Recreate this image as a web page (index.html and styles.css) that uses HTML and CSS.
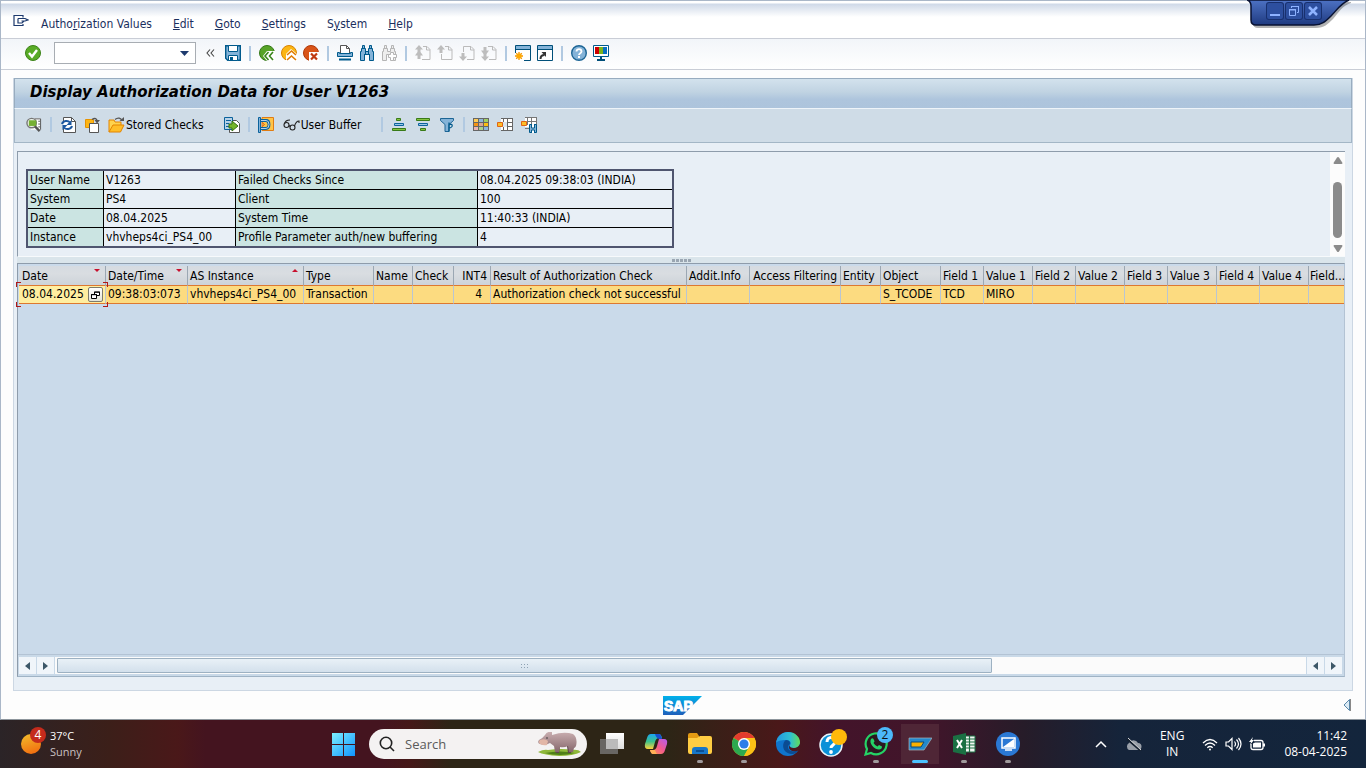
FILE: index.html
```html
<!DOCTYPE html>
<html lang="en">
<head>
    <meta charset="UTF-8">
    <meta name="viewport" content="width=device-width, initial-scale=1.0">
    <title>Display Authorization Data for User V1263</title>
    <link rel="stylesheet" href="styles.css">
</head>
<body>
    <div class="window">
        <nav class="menu-bar">
            <button class="icon-btn menu-icon" aria-label="Menu">
                <svg width="16" height="14" viewBox="0 0 16 14" fill="none" stroke="#1d3a6e" stroke-width="1.2"><path d="M10 3.500V1.500H1V11.500H10V10"/><path d="M5 4.500H12l3 1.500-3 1H8.500M5 4.500v4.500H9l2-2"/></svg>
            </button>
            <a href="#">Autho<u>r</u>ization Values</a>
            <a href="#"><u>E</u>dit</a>
            <a href="#"><u>G</u>oto</a>
            <a href="#"><u>S</u>ettings</a>
            <a href="#">S<u>y</u>stem</a>
            <a href="#"><u>H</u>elp</a>
        </nav>

        <div class="window-controls">
            <svg class="controls-shape" width="104" height="30" viewBox="0 0 104 30">
                <defs><linearGradient id="tab" x1="0" y1="0" x2="0" y2="1"><stop offset="0" stop-color="#4d72c4"/><stop offset="1" stop-color="#1f3a80"/></linearGradient></defs>
                <path d="M1 0c3 1 4 3 4 6v15q0 5 5 5h58c8 0 12-4 17-9C91 10 94 4 103 1V0z" fill="#000" opacity=".3" transform="translate(1 2)"/>
                <path d="M0 0c3 1 4 3 4 6v14q0 5 5 5h58c8 0 12-4 17-9C90 10 94 3 102 0z" fill="url(#tab)" stroke="#081233" stroke-width="1.500"/>
            </svg>
            <div class="controls-row">
                <button aria-label="Minimize"><svg width="16" height="16" viewBox="0 0 16 16"><path d="M3 11h10v2H3z" fill="#8fb3ff"/></svg></button>
                <button aria-label="Restore"><svg width="16" height="16" viewBox="0 0 16 16" fill="none" stroke="#8fb3ff"><path d="M5.500 5V3.500h7v6H11M3.500 7h6v5.500h-6zM3 6.500h7M5 3.500h8"/></svg></button>
                <button aria-label="Close"><svg width="16" height="16" viewBox="0 0 16 16" stroke="#8fb3ff" stroke-width="2.500"><path d="M4 4l8 8M12 4l-8 8"/></svg></button>
            </div>
        </div>

        <div class="toolbar">
            <button class="icon-btn ok-btn" aria-label="Enter"><svg width="18" height="18" viewBox="0 0 18 18"><circle cx="9" cy="9" r="7.500" fill="#58ab26" stroke="#3c8318"/><path d="M5 9l3 3.500L13 6" fill="none" stroke="#fff" stroke-width="2.400"/></svg></button>
            <label class="command">
                <input type="text" aria-label="Command">
                <svg width="9" height="5" viewBox="0 0 9 5"><path d="M0 0h9L4.500 5z" fill="#1d3a6e"/></svg>
            </label>
            <button class="icon-btn collapse-btn" aria-label="Collapse"><svg width="9" height="8" viewBox="0 0 9 8" fill="none" stroke="#444" stroke-width="1.100"><path d="M4 .5L1 4l3 3.500M8 .5L5 4l3 3.500"/></svg></button>
            <button class="icon-btn" aria-label="Save"><svg width="16" height="16" viewBox="0 0 16 16"><path d="M.7.7h14.600v14.600H2.700l-2-2z" fill="#84b3d8" stroke="#005a8c" stroke-width="1.400"/><path d="M3.500.5h9v6h-9z" fill="#fff" stroke="#005a8c"/><path d="M3.500 10.500h9v5h-9z" fill="#fff" stroke="#005a8c"/><path d="M5 12h3v3H5z" fill="#005a8c"/></svg></button>
            <span class="sep"></span>
            <button class="icon-btn" aria-label="Back"><svg width="16" height="16" viewBox="0 0 16 16"><circle cx="8" cy="8" r="7.500" fill="#57a327" stroke="#347818"/><path d="M4 11l4-5h8v10H8z" fill="#fff"/><path d="M9.500 7L6 11l3.500 4M14 7l-3.500 4 3.500 4" fill="none" stroke="#3b851c" stroke-width="1.600"/></svg></button>
            <button class="icon-btn" aria-label="Exit"><svg width="16" height="16" viewBox="0 0 16 16"><circle cx="8" cy="8" r="7.500" fill="#fbb614" stroke="#d98200"/><path d="M5 9l5-5 6 5v7H5z" fill="#fff"/><path d="M6 10l4.500-4 4.500 4M6 15l4.500-4 4.500 4" fill="none" stroke="#e07a00" stroke-width="1.600"/></svg></button>
            <button class="icon-btn" aria-label="Cancel"><svg width="16" height="16" viewBox="0 0 16 16"><circle cx="8" cy="8" r="7.500" fill="#d95418" stroke="#b03808"/><path d="M6 7h10v9H6z" fill="#fff"/><path d="M8 8.500l6 6M14 8.500l-6 6" stroke="#c03a10" stroke-width="2.200"/></svg></button>
            <span class="sep"></span>
            <button class="icon-btn" aria-label="Print"><svg width="16" height="16" viewBox="0 0 16 16"><path d="M3.500 8V.5h6l3 3V8" fill="#fff" stroke="#555"/><path d="M9.500.5v3h3" fill="none" stroke="#555"/><path d="M.5 7.500h2v1h11v-1h2v4H.5z" fill="#84b3d8" stroke="#005a8c"/><path d="M2 13.500h12v2H2z" fill="#005a8c"/></svg></button>
            <button class="icon-btn" aria-label="Find"><svg width="16" height="16" viewBox="0 0 16 16" fill="#84b3d8" stroke="#005a8c"><path d="M3.500.5h2v3h-2zM10.500.5h2v3h-2zM2.500 3.500h4v3h3v-3h4v3h1v9h-4v-6h-5v6h-4v-9h1z"/><path d="M6.500 6v3.500M9.500 6v3.500M5.500 9v3M10.500 9v3"/></svg></button>
            <button class="icon-btn" aria-label="Find next"><svg width="16" height="16" viewBox="0 0 16 16" fill="#eee" stroke="#b5b5b5"><path d="M3.500.5h2v3h-2zM10.500.5h2v3h-2zM2.500 3.500h4v3h3v-3h4v3h1v9h-4v-6h-5v6h-4v-9h1z"/><path d="M9.500 7.500h3v2h3v3h-3v3h-3v-3h-2v-3h2z" fill="#fff"/></svg></button>
            <span class="sep"></span>
            <button class="icon-btn" aria-label="First page"><svg width="16" height="16" viewBox="0 0 16 16"><path d="M8 1.500h4l3 3v10H7M11.500 1.500v3.500h3.500" fill="none" stroke="#bbb"/><path d="M4 0l4 4.500H5.500V7L8 10.500H5.500V14h-3v-3.500H0L2.500 7V4.500H0z" fill="#bdbdbd"/></svg></button>
            <button class="icon-btn" aria-label="Previous page"><svg width="16" height="16" viewBox="0 0 16 16"><path d="M8 1.500h4l3 3v10H4.500V9M11.500 1.500v3.500h3.500" fill="none" stroke="#bbb"/><path d="M4 0l4 4.500H5.500V8h-3V4.500H0z" fill="#bdbdbd"/></svg></button>
            <button class="icon-btn" aria-label="Next page"><svg width="16" height="16" viewBox="0 0 16 16"><path d="M4.500 7V1.500H12l3 3v10H8M11.500 1.500v3.500h3.500" fill="none" stroke="#bbb"/><path d="M4 16l4-4.500H5.500V8h-3v3.500H0z" fill="#bdbdbd"/></svg></button>
            <button class="icon-btn" aria-label="Last page"><svg width="16" height="16" viewBox="0 0 16 16"><path d="M7 1.500h5l3 3v10H8M11.500 1.500v3.500h3.500" fill="none" stroke="#bbb"/><path d="M4 16l4-4.500H5.500V9L8 5.500H5.500V2h-3v3.500H0L2.500 9v2.500H0z" fill="#bdbdbd"/></svg></button>
            <span class="sep"></span>
            <button class="icon-btn" aria-label="New session"><svg width="16" height="16" viewBox="0 0 16 16"><path d="M.5.5h15v15H.5z" fill="#fff"/><path d="M.5 8V.5h15v15H9" fill="none" stroke="#004f79"/><path d="M1 1h14v3H1z" fill="#84b3d8"/><path d="M0 4.500h16" stroke="#004f79"/><path d="M4 7v8M0 11h8M1.200 8.200l5.600 5.600M6.800 8.200l-5.600 5.600" stroke="#f59500" stroke-width="1.300"/><circle cx="4" cy="11" r="2.500" fill="#fa0"/></svg></button>
            <button class="icon-btn" aria-label="Create shortcut"><svg width="16" height="16" viewBox="0 0 16 16"><path d="M.5.500h15v15H.5z" fill="#fff" stroke="#004f79"/><path d="M1 1h14v3H1z" fill="#84b3d8"/><path d="M0 4.500h16" stroke="#004f79"/><path d="M3.500 14c0-3 1-4 4-4" fill="none" stroke="#333" stroke-width="2"/><path d="M4.500 7H9v5z" fill="#333"/></svg></button>
            <span class="sep"></span>
            <button class="icon-btn" aria-label="Help"><svg width="16" height="16" viewBox="0 0 16 16"><circle cx="8" cy="8" r="7.300" fill="#84b3d8" stroke="#1c6595" stroke-width="1.400"/><path d="M5.500 6.500c0-3.300 5-3.300 5 0 0 1.700-2.500 1.700-2.500 3.500" fill="none" stroke="#fff" stroke-width="1.800"/><path d="M7 11h2v2H7z" fill="#fff"/></svg></button>
            <button class="icon-btn" aria-label="Customize layout"><svg width="16" height="16" viewBox="0 0 16 16"><path d="M.5.500h15v11H.5z" fill="#fff" stroke="#005a8c"/><path d="M2 2h4v7H2z" fill="#c00"/><path d="M6 2h4v7H6z" fill="#7cb51c"/><path d="M10 2h4v7h-4z" fill="#0a70c0"/><path d="M7 12h2v2h3v2H4v-2h3z" fill="#004f79"/></svg></button>
        </div>

        <main class="frame">
            <h1 class="title">Display Authorization Data for User V1263</h1>
            <div class="app-toolbar">
                <button class="icon-btn" aria-label="Details"><svg width="16" height="16" viewBox="0 0 17 16"><path d="M5 1h10v12H5z" fill="#fff"/><path d="M9 1.500h6.500V13M13 4h2M13 7h2M13 10h2" fill="none" stroke="#555"/><circle cx="6" cy="6" r="5" fill="#eef5ea" stroke="#777" stroke-width="1.500"/><path d="M3 3h8v6H3z" fill="#76b033"/><path d="M9.500 9.500l5 5" stroke="#555" stroke-width="2.600"/></svg></button>
                <span class="sep"></span>
                <button class="icon-btn" aria-label="Refresh"><svg width="16" height="16" viewBox="0 0 16 16"><path d="M3.500 6V.5h8l4 4v11h-12V11" fill="#fff" stroke="#555"/><path d="M11.500.5v4h4" fill="none" stroke="#555"/><path d="M2 7c1-3.500 6-4 8-1.500M12 9c-1 3.500-6 4-8 1.500" fill="none" stroke="#1b57a0" stroke-width="2"/><path d="M11.500 3v5h-5zM2.500 13V8h5z" fill="#1b57a0"/></svg></button>
                <button class="icon-btn" aria-label="Copy"><svg width="16" height="16" viewBox="0 0 16 16"><path d="M1.500 2.500h8v8h-8z" fill="#fdb515" stroke="#e89400"/><path d="M5.500 6.500h9v9h-9z" fill="#fff" stroke="#555"/><path d="M8 2.500c3-2 5-1 5 2" fill="none" stroke="#555" stroke-width="1.400"/><path d="M10.500 3H16l-3 3.500z" fill="#555"/></svg></button>
                <button class="icon-btn text-btn"><svg width="17" height="16" viewBox="0 0 17 16"><path d="M1 15V3h5l1 2h6v3" fill="#ffd34d" stroke="#e38400"/><path d="M1 15l4-7h11l-3.500 7z" fill="#ffbe28" stroke="#e38400"/><path d="M7 2.500C10 0 13 1 14 4" fill="none" stroke="#555" stroke-width="1.300"/><path d="M11.500 4H16V0z" fill="#555"/></svg>Stored Checks</button>
                <button class="icon-btn" aria-label="Export"><svg width="16" height="16" viewBox="0 0 16 16"><path d="M5.500 3.500h7l3 3v9h-10z" fill="#fff" stroke="#555"/><path d="M.5.5h8v12h-8z" fill="#b6d1e7" stroke="#0b629c"/><path d="M2 3.500h5M2 6.500h3M2 9.500h3" stroke="#0b629c"/><path d="M5 7h3V4l6 5-6 5v-3H5z" fill="#74b52b" stroke="#356f14"/></svg></button>
                <span class="sep"></span>
                <button class="icon-btn buffer-btn" aria-label="Reset buffer"><svg width="16" height="16" viewBox="0 0 16 16"><path d="M4 .5h11.500v13H4z" fill="#ffc447" stroke="#e07c13"/><path d="M.5.5h2v15h-2z" fill="#84b3d8" stroke="#0b629c"/><path d="M3 3.500h5q3 0 3 4t-3 4H3" fill="none" stroke="#0b629c" stroke-width="2.800"/><path d="M3 3.500h5q3 0 3 4t-3 4H3" fill="none" stroke="#b6d1e7" stroke-width="1"/><path d="M4 5.500l2.500 2L4 9.500" fill="none" stroke="#d3591b"/></svg></button>
                <button class="icon-btn text-btn"><svg width="17" height="16" viewBox="0 0 17 16" fill="none" stroke="#222" stroke-width="1.100"><circle cx="3.500" cy="8" r="2.500"/><circle cx="9.500" cy="10.500" r="2.500"/><path d="M6 8.500l1.300 1M1.500 7C2 4 5 3 7 3M11.500 9c1-3 2-5 4.500-5v2"/></svg>User Buffer</button>
                <span class="sep"></span>
                <button class="icon-btn" aria-label="Sort ascending"><svg width="16" height="16" viewBox="0 0 16 16"><path d="M5.500 1.500h4v2h-4zM1.500 11.500h13v2h-13z" fill="#86c440" stroke="#387a18"/><path d="M3.500 6.500h9v2h-9z" fill="#9bc8e4" stroke="#0b629c"/></svg></button>
                <button class="icon-btn" aria-label="Sort descending"><svg width="16" height="16" viewBox="0 0 16 16"><path d="M1.500 1.500h13v2h-13zM5.500 11.500h5v2h-5z" fill="#86c440" stroke="#387a18"/><path d="M3.500 6.500h9v2h-9z" fill="#9bc8e4" stroke="#0b629c"/></svg></button>
                <button class="icon-btn" aria-label="Filter"><svg width="16" height="16" viewBox="0 0 16 16"><path d="M1.500 1.500h13v2l-4.500 4v7H6V7.500l-4.500-4z" fill="#84b3d8" stroke="#1c6595"/><path d="M10 5.500v9M10 7.500q4-1 3 2-1 1.500-3 1.500" fill="none" stroke="#005a8c" stroke-width="1.300"/></svg></button>
                <span class="sep"></span>
                <button class="icon-btn" aria-label="Choose layout"><svg width="16" height="16" viewBox="0 0 16 16"><path d="M0 1h16v13H0z" fill="#666"/><path d="M1 2h4v3H1z" fill="#fc5"/><path d="M6 2h4v3H6z" fill="#8db6dc"/><path d="M11 2h4v3h-4z" fill="#a0cf62"/><path d="M1 6h4v3H1z" fill="#f59312"/><path d="M6 6h4v3H6z" fill="#d9a796"/><path d="M11 6h4v3h-4z" fill="#fdbe10"/><path d="M1 10h4v3H1z" fill="#eab4b4"/><path d="M6 10h4v3H6z" fill="#a7d18a"/><path d="M11 10h4v3h-4z" fill="#8db6dc"/></svg></button>
                <button class="icon-btn" aria-label="Change layout"><svg width="16" height="16" viewBox="0 0 16 16"><path d="M4 1h12v13H4z" fill="#fff"/><path d="M4 1.500h12M7 5.500h9M7 9.500h9M4 13.500h12M6.500 1v12M10.500 1v12M15.500 1v12" stroke="#666"/><path d="M1 5h9v5H1z" fill="#d9e5ef"/><path d="M.5 5.500h5v4h-5z" fill="#fdbe28" stroke="#e06415"/></svg></button>
                <button class="icon-btn" aria-label="Save layout"><svg width="16" height="16" viewBox="0 0 16 16"><path d="M4 0h12v10H4z" fill="#fff"/><path d="M4 .5h12M7 4.500h9M4 11.500h4M6.500 0v8M10.500 0v8M15.500 0v8" stroke="#777"/><path d="M.5 4.500h5v4h-5z" fill="#fdbe28" stroke="#e06415"/><path d="M8.500 7.500h7v8h-7z" fill="#84b3d8" stroke="#005a8c"/><path d="M10.500 7v4h3V7M10.500 16v-3h3v3" fill="#fff" stroke="#005a8c"/></svg></button>
            </div>

            <div class="content">
                <section class="info-panel">
                    <table class="info">
                        <tr><th>User Name</th><td>V1263</td><th>Failed Checks Since</th><td>08.04.2025 09:38:03 (INDIA)</td></tr>
                        <tr><th>System</th><td>PS4</td><th>Client</th><td>100</td></tr>
                        <tr><th>Date</th><td>08.04.2025</td><th>System Time</th><td>11:40:33 (INDIA)</td></tr>
                        <tr><th>Instance</th><td>vhvheps4ci_PS4_00</td><th>Profile Parameter auth/new buffering</th><td>4</td></tr>
                    </table>
                    <div class="v-scroll">
                        <svg width="10" height="7" viewBox="0 0 10 7"><path d="M4 .5q1-1 2 0L9.500 6q0 1-1 1h-7q-1 0-1-1z" fill="#8b8b8b"/></svg>
                        <span class="v-thumb"></span>
                        <svg width="10" height="7" viewBox="0 0 10 7"><path d="M4 6.500q1 1 2 0L9.500 1q0-1-1-1h-7q-1 0-1 1z" fill="#8b8b8b"/></svg>
                    </div>
                </section>
                <div class="splitter"><span></span></div>
                <section class="grid-panel">
                    <div class="grid-body">
                        <table class="grid">
                            <colgroup>
                                <col class="w-date"><col class="w-time"><col class="w-inst"><col class="w-type"><col class="w-name"><col class="w-check"><col class="w-int"><col class="w-result"><col class="w-addit"><col class="w-access"><col class="w-entity"><col class="w-object">
                                <col class="w-field"><col class="w-value"><col class="w-field"><col class="w-value"><col class="w-field"><col class="w-value"><col class="w-field"><col class="w-value"><col>
                            </colgroup>
                            <thead>
                                <tr>
                                    <th class="desc">Date</th><th class="desc">Date/Time</th><th class="asc">AS Instance</th><th>Type</th><th>Name</th><th>Check</th><th class="num">INT4</th><th>Result of Authorization Check</th><th>Addit.Info</th><th class="num">Access Filtering</th><th>Entity</th><th>Object</th><th>Field 1</th><th>Value 1</th><th>Field 2</th><th>Value 2</th><th>Field 3</th><th>Value 3</th><th>Field 4</th><th>Value 4</th><th>Field...</th>
                                </tr>
                            </thead>
                            <tbody>
                                <tr>
                                    <td class="active"><div class="cell-edit"><span>08.04.2025</span><button aria-label="Value help"><svg width="9" height="8" viewBox="0 0 9 8" fill="#fff" stroke="#000"><path d="M3.500 1h5v3.500h-5z"/><path d="M.5 3.500h5v4h-5zM3 1.200h6M0 3.700h6"/></svg></button></div></td><td>09:38:03:073</td><td>vhvheps4ci_PS4_00</td><td>Transaction</td><td></td><td></td><td class="num">4</td><td>Authorization check not successful</td><td></td><td></td><td></td><td>S_TCODE</td><td>TCD</td><td>MIRO</td><td></td><td></td><td></td><td></td><td></td><td></td><td></td>
                                </tr>
                            </tbody>
                        </table>
                    </div>
                    <div class="h-scroll">
                        <button aria-label="Scroll left"><svg width="5" height="8" viewBox="0 0 5 8"><path d="M5 0v8L0 4z" fill="#3c5768"/></svg></button>
                        <button aria-label="Scroll right"><svg width="5" height="8" viewBox="0 0 5 8"><path d="M0 0v8l5-4z" fill="#3c5768"/></svg></button>
                        <div class="h-track"><div class="h-thumb"><span></span></div></div>
                        <button aria-label="Scroll left"><svg width="5" height="8" viewBox="0 0 5 8"><path d="M5 0v8L0 4z" fill="#3c5768"/></svg></button>
                        <button aria-label="Scroll right"><svg width="5" height="8" viewBox="0 0 5 8"><path d="M0 0v8l5-4z" fill="#3c5768"/></svg></button>
                    </div>
                </section>
            </div>
        </main>

        <footer class="status-bar">
            <svg class="sap-logo" width="40" height="19" viewBox="0 0 40 19">
                <defs><linearGradient id="sap" x1="0" y1="0" x2="0" y2="1"><stop offset="0" stop-color="#00b1eb"/><stop offset="1" stop-color="#1e5fbb"/></linearGradient></defs>
                <path d="M0 0h39L20 19H0z" fill="url(#sap)"/>
                <text x="1" y="15" class="sap-text">SAP</text>
            </svg>
            <button class="icon-btn" aria-label="Expand status"><svg width="9" height="12" viewBox="0 0 9 12"><path d="M6.500.500v11L1 6z" fill="#dcebf5" stroke="#5b87a8"/><path d="M7.500 0v12" stroke="#888"/></svg></button>
        </footer>
    </div>

    <div class="taskbar">
        <div class="weather">
            <div class="sun"><span class="sun-badge">4</span></div>
            <div><div>37°C</div><div class="dim">Sunny</div></div>
        </div>
        <div class="apps">
            <button class="start" aria-label="Start"><svg width="24" height="24" viewBox="0 0 24 24"><defs><linearGradient id="win" x1="0" y1="0" x2="1" y2="1"><stop offset="0" stop-color="#7df0ff"/><stop offset="1" stop-color="#0f93ff"/></linearGradient></defs><path d="M0 1h11v11H0zM12 1h11v11H12zM0 13h11v11H0zM12 13h11v11H12z" fill="url(#win)"/></svg></button>
            <label class="search">
                <svg width="16" height="16" viewBox="0 0 16 16" fill="none" stroke="#222" stroke-width="1.600"><circle cx="7" cy="7" r="5.700"/><path d="M11 11l4 4"/></svg>
                <input type="text" placeholder="Search" aria-label="Search">
                <svg width="44" height="24" viewBox="0 0 44 24">
                    <defs><linearGradient id="hippo" x1="0" y1="0" x2="0" y2="1"><stop offset="0" stop-color="#c9aeb0"/><stop offset="1" stop-color="#86676c"/></linearGradient></defs>
                    <path d="M0 20q6-3 10-2 14-2 24 0 6-1 9 2-8 4-22 4-15-1-21-4z" fill="#8fb83a"/>
                    <path d="M7 21q15-3 30 0-15 4-30 0z" fill="#4f7f18"/>
                    <path d="M29 14l1 7h3l1-7zM17 15l1 6h3l1-6z" fill="#5f454b"/>
                    <path d="M14 3q12-4 21-1 5 4 3 12-1 2-2 2l-1 4h-4l-1-6q-4 2-8 1l-1 5h-4l-1-6-4-3q-5 3-10 1-3-1-1-4 3-1 6-5 2-4 7-3z" fill="url(#hippo)"/>
                    <path d="M2 8q5-2 8 1l-1 4q-3 1-7-1-2-2 0-4z" fill="#e2b6a6"/><circle cx="9" cy="6" r=".8" fill="#333"/>
                </svg>
            </label>
            <button class="app" aria-label="Task view"><svg width="24" height="24" viewBox="0 0 24 24"><defs><linearGradient id="tv" x1="0" y1="0" x2="0" y2="1"><stop offset="0" stop-color="#fff"/><stop offset="1" stop-color="#ddd"/></linearGradient></defs><path d="M6 1h18v16H6z" fill="url(#tv)"/><path d="M0 7h18v15H0z" fill="#777" opacity=".8"/><path d="M6 7h12v10H6z" fill="#bbb"/></svg></button>
            <button class="app" aria-label="Copilot"><svg width="24" height="24" viewBox="0 0 24 24">
                <defs><linearGradient id="cp1" x1="0" y1="0" x2="0" y2="1"><stop offset="0" stop-color="#1aa7f2"/><stop offset=".5" stop-color="#3cc28b"/><stop offset="1" stop-color="#ffd23a"/></linearGradient><linearGradient id="cp2" x1="1" y1="0" x2="0" y2="1"><stop offset="0" stop-color="#b25cf0"/><stop offset=".5" stop-color="#f25a8e"/><stop offset="1" stop-color="#ff9a4a"/></linearGradient></defs>
                <path d="M7 2h8q2 0 3 4h-3q-3 0-4 4l-2 7H4q-4 0-3-5l2-6q1-4 4-4z" fill="url(#cp1)"/>
                <path d="M17 22H9q-2 0-3-4h3q3 0 4-4l2-7h5q4 0 3 5l-2 6q-1 4-4 4z" fill="url(#cp2)"/>
                <path d="M11 2h4q2 0 3 5h-3q-3-1-4-5z" fill="#174fce"/><path d="M6 18h5q1 3 2 4H9q-2 0-3-4z" fill="#ffb057"/>
            </svg></button>
            <button class="app running" aria-label="File Explorer"><svg width="24" height="24" viewBox="0 0 24 24"><path d="M0 3q0-2 2-2h7l2 3v4H0z" fill="#e49b13"/><path d="M0 6h9l3-2h10q2 0 2 2v14q0 2-2 2H2q-2 0-2-2z" fill="#ffcd43"/><path d="M4 22v-4q0-3 3-3h10q3 0 3 3v4z" fill="#1876c8"/><path d="M8 18h8v2H8z" fill="#0a4f94"/></svg></button>
            <button class="app running" aria-label="Chrome"><svg width="24" height="24" viewBox="0 0 24 24"><circle cx="12" cy="12" r="12" fill="#fbc116"/><path d="M12 12L1.600 6A12 12 0 0 1 22.400 6H12z" fill="#e33b2e"/><path d="M12 12L1.600 6A12 12 0 0 0 12 24l5-9z" fill="#2da94f"/><path d="M12 6h10.400A12 12 0 0 1 12 24l5.200-9z" fill="#fbc116"/><circle cx="12" cy="12" r="6" fill="#fff"/><circle cx="12" cy="12" r="4.600" fill="#2b7de9"/></svg></button>
            <button class="app" aria-label="Edge"><svg width="24" height="24" viewBox="0 0 24 24">
                <defs><linearGradient id="ed" x1="0" y1="0" x2="1" y2="0"><stop offset="0" stop-color="#2397e0"/><stop offset=".6" stop-color="#2fc0d0"/><stop offset="1" stop-color="#62dc58"/></linearGradient></defs>
                <circle cx="12" cy="12" r="12" fill="#0f74cc"/>
                <path d="M0 11C1 4 6 0 12 0c7 0 12 5 12 10 0 4-3 6-6 6-4 0-5-2-4-3 2-2 0-5-4-5-5 0-9 1-10 3z" fill="url(#ed)"/>
                <path d="M10 8c-4 2-5 13 6 14 3 0 5-2 6-4-3 2-10 2-10-3 0-2 2-2 2-4 0-2-2-3-4-3z" fill="#0b4c92"/>
                <path d="M14 13q-1 3 4 3 4 0 6-4v6l-3 1q-8 1-8-4z" fill="#4a181e"/>
            </svg></button>
            <button class="app" aria-label="Help"><svg width="30" height="30" viewBox="0 0 30 30"><circle cx="14" cy="16" r="11" fill="#0a91d8" stroke="#e9f5fb" stroke-width="1.500"/><path d="M10 13c0-6 8-6 8 0 0 3-4 3-4 6" fill="none" stroke="#fff" stroke-width="3"/><circle cx="14" cy="23" r="1.900" fill="#fff"/><circle cx="22" cy="8" r="8" fill="#ffb90a"/></svg></button>
            <button class="app running" aria-label="WhatsApp"><svg width="24" height="24" viewBox="0 0 24 24"><path d="M1.500 22.500L3 17A10.500 10.500 0 1 1 7 21z" fill="#2b1820" stroke="#25d366" stroke-width="2.200"/><path d="M7 7q2-2 3 1l.5 1.500-1 1.500q1.500 2.500 4 3.500l1.500-1.500 3 1.500q0 3-3 3-4 0-7-4-2.500-3.500-1-6.500z" fill="#25d366"/></svg><span class="badge">2</span></button>
            <button class="app running current" aria-label="SAP Logon"><svg width="24" height="24" viewBox="0 0 24 24"><path d="M1 6h23l-8 12H1z" fill="#2389cc" stroke="#a9b4b8" stroke-width=".7"/><path d="M3 10h13l-3 5H3z" fill="#f7b000" stroke="#0d4875"/></svg></button>
            <button class="app running" aria-label="Excel"><svg width="24" height="24" viewBox="0 0 24 24"><path d="M13 4h10v16H13z" fill="#f2f6f3" stroke="#1d7044"/><path d="M13 7h10M13 10h10M13 13h10M13 16h10M17.500 4v16" stroke="#1d7044" stroke-width="1.200"/><path d="M1 4l13-3v22L1 20z" fill="#1a7043"/><path d="M5 8l5 8M10 8l-5 8" stroke="#fff" stroke-width="2"/></svg></button>
            <button class="app running" aria-label="Remote Desktop"><svg width="24" height="24" viewBox="0 0 24 24"><circle cx="12" cy="12" r="12" fill="#2a78d4"/><path d="M6 6h13v10H6z" fill="#2a78d4" stroke="#fff" stroke-width="1.500"/><path d="M7 15L18 7v8z" fill="#fff"/><path d="M9 18h7" stroke="#fff" stroke-width="1.500"/></svg></button>
        </div>
        <div class="tray">
            <svg width="12" height="8" viewBox="0 0 12 8" fill="none" stroke="#fff" stroke-width="1.500"><path d="M1 7l5-5 5 5"/></svg>
            <svg width="17" height="14" viewBox="0 0 17 14"><path d="M4 13a4 4 0 0 1 0-7 5 5 0 0 1 9 0 3.500 3.500 0 0 1 0 7z" fill="#999fa8"/><path d="M2 2l14 12" stroke="#14202f" stroke-width="2"/><path d="M3 1l13 12" stroke="#ddd"/></svg>
            <div class="lang"><div>ENG</div><div>IN</div></div>
            <div class="tray-icons">
                <svg width="16" height="13" viewBox="0 0 16 13" fill="none" stroke="#fff" stroke-width="1.300"><path d="M1 5q7-7 14 0M3 7.500q5-5 10 0M5.300 9.700q2.700-2.500 5.400 0"/><circle cx="8" cy="11.500" r="1" fill="#fff" stroke="none"/></svg>
                <svg width="17" height="14" viewBox="0 0 17 14" fill="none" stroke="#fff" stroke-width="1.200"><path d="M1 5h2.500L7 1.500v11L3.500 9H1zM9.500 4.500q2 2.500 0 5M11.500 2.500q4 4.500 0 9M13.500 1q5 6 0 12"/></svg>
                <svg width="17" height="14" viewBox="0 0 17 14"><path d="M5 3.500h7q2 0 2 2v5q0 2-2 2H4q-2 0-2-2V7" fill="none" stroke="#fff" stroke-width="1.300"/><path d="M4 6.500l2-1h6v5H4z" fill="#fff"/><path d="M15 6.500v3" stroke="#fff" stroke-width="2"/><path d="M4 0L0 5h2L1 8l4-5H3z" fill="#fff"/></svg>
            </div>
            <div class="clock"><div>11:42</div><div>08-04-2025</div></div>
        </div>
    </div>
</body>
</html>
```

FILE: styles.css
```css
* {
    box-sizing: border-box;
}
body {
    margin: 0;
    height: 100vh;
    display: flex;
    flex-direction: column;
    font-family: "DejaVu Sans Condensed", Tahoma, sans-serif;
    font-size: 12px;
    color: #000;
    overflow: hidden;
}
button {
    font: inherit;
    color: inherit;
    border: 0;
    padding: 0;
    background: none;
}
svg {
    display: block;
    flex: none;
}

/* SAP window */
.window {
    flex: 1;
    display: flex;
    flex-direction: column;
    position: relative;
    border: 1px solid #aab7c8;
    border-bottom-color: #8d959c;
    background: #fdfdfd;
    min-height: 0;
}
.menu-bar {
    display: flex;
    align-items: center;
    gap: 21px;
    height: 38px;
    padding: 8px 12px 0;
    background: linear-gradient(#fff 2px, #cfd9e8 3px, #fff 16px);
    border-bottom: 1px solid #c9cdd6;
}
.menu-bar a {
    color: #1b2f5e;
    text-decoration: none;
}
.menu-icon {
    margin-right: -9px;
    padding-bottom: 6px;
}
.icon-btn {
    display: flex;
    align-items: center;
    justify-content: center;
    min-width: 16px;
}
.window-controls {
    position: absolute;
    top: -1px;
    right: 14px;
    width: 104px;
}
.controls-shape {
    position: absolute;
    top: 0;
    left: 0;
}
.controls-row {
    position: absolute;
    top: 3px;
    left: 20px;
    display: flex;
    gap: 3px;
}
.controls-row button {
    width: 16px;
    height: 16px;
    border-radius: 2px;
    background: #2d4f9f;
    box-shadow: 0 0 0 1px #18306e;
}
.toolbar {
    display: flex;
    align-items: center;
    gap: 6px;
    height: 31px;
    padding: 0 23px 2px;
    background: linear-gradient(#f2f5f9, #fff);
    border-bottom: 1px solid #c9cdd6;
}
.ok-btn {
    margin-right: 6px;
}
.command {
    display: flex;
    align-items: center;
    width: 142px;
    height: 22px;
    padding-right: 6px;
    border: 1px solid #a8adb3;
    background: #fff;
}
.command input {
    flex: 1;
    min-width: 0;
    border: 0;
    outline: 0;
    background: none;
    font: inherit;
}
.collapse-btn {
    margin-right: 1px;
}
.sep {
    width: 6px;
    height: 15px;
    flex: none;
    background: linear-gradient(#b1c9e1, #b1c9e1) center / 2px 100% no-repeat;
}

.frame {
    flex: 1;
    display: flex;
    flex-direction: column;
    min-height: 0;
    margin: 8px 12px 0;
    border: 1px solid #ccd7e3;
    border-top: 0;
    background: #e8eff6;
}
.title {
    margin: 0;
    height: 31px;
    padding-left: 15px;
    border: 1px solid #98acbf;
    border-bottom-color: #eef4f9;
    background: linear-gradient(#d3e2ed, #c0d3e2 45%, #aec5dd 70%, #adc4dc);
    font: italic bold 15px/26px "DejaVu Sans", Verdana, sans-serif;
}
.app-toolbar {
    display: flex;
    align-items: center;
    gap: 8px;
    height: 34px;
    padding: 0 11px 2px;
    border: 1px solid #a3b6c6;
    border-top: 0;
    background: #cfdce7;
}
.app-toolbar .sep {
    width: 2px;
}
.text-btn {
    gap: 1px;
    padding-right: 12px;
    white-space: nowrap;
}
.buffer-btn {
    margin-right: 1px;
}
.content {
    flex: 1;
    display: flex;
    flex-direction: column;
    min-height: 0;
    padding: 8px 7px 13px 3px;
}

.info-panel {
    display: flex;
    justify-content: space-between;
    border-top: 1px solid #8e9cab;
    border-left: 1px solid #8e9cab;
    border-bottom: 1px solid #f7fafc;
}
.info {
    margin: 17px 0 8px 8px;
    border: 2px solid #4f556f;
    border-spacing: 0;
    table-layout: fixed;
    width: 648px;
    line-height: 17px;
}
.info th,
.info td {
    padding: 1px 0 0 2px;
    text-align: left;
    font-weight: normal;
    white-space: nowrap;
    border-bottom: 1px solid #000;
    border-right: 1px solid #000;
}
.info th {
    background: #cbe4e2;
    width: 76px;
}
.info th:nth-child(3) {
    width: 242px;
}
.info td:nth-child(2) {
    width: 132px;
}
.info td:last-child {
    border-right: 0;
}
.info tr:last-child > * {
    border-bottom: 0;
}
.v-scroll {
    width: 15px;
    padding: 5px 0 4px;
    background: #fcfcfc;
    display: flex;
    flex-direction: column;
    align-items: center;
}
.v-thumb {
    flex: 1;
    width: 9px;
    margin: 18px 0 7px;
    border-radius: 5px;
    background: #8b8b8b;
}
.splitter {
    height: 6px;
    background: #dae5eb;
    display: flex;
    justify-content: center;
    align-items: center;
}
.splitter span {
    width: 19px;
    height: 3px;
    background: repeating-linear-gradient(90deg, #9aa6b2 0 3px, transparent 3px 4px);
}

.grid-panel {
    flex: 1;
    display: flex;
    flex-direction: column;
    min-height: 0;
    border: 1px solid #8e9cab;
    border-right-color: #b3c3d4;
    border-bottom-color: #9fb3c5;
    background: #c9d9e8;
}
.grid-body {
    flex: 1;
    padding: 2px 0 0 1px;
    background: #cadaea;
    border-bottom: 1px solid #b3c3d4;
}
.grid {
    width: 100%;
    table-layout: fixed;
    border-spacing: 0;
    line-height: 17px;
}
.grid th,
.grid td {
    padding: 0 2px;
    text-align: left;
    font-weight: normal;
    white-space: nowrap;
}
.grid th {
    height: 19px;
    padding-top: 2px;
    border-right: 1px solid #9ba7b3;
    background: linear-gradient(#d5dbe1, #d9dde1 40%, #cdd3d9);
}
.grid td {
    height: 19px;
    border-top: 1px solid #dd7830;
    border-bottom: 1px solid #dd7830;
    border-right: 1px solid #b9c5d3;
    background: #fcdb80;
}
.grid th:first-child,
.grid td:first-child {
    padding-left: 3px;
}
.grid th:last-child,
.grid td:last-child {
    padding-left: 1px;
    padding-right: 0;
    border-right: 0;
}
.grid .num {
    text-align: right;
    padding-right: 3px;
}
.grid td.num {
    padding-right: 8px;
}
/* sort markers */
.desc,
.asc {
    position: relative;
}
.desc::after,
.asc::after {
    content: "";
    position: absolute;
    top: 3px;
    right: 5px;
    border: 3px solid transparent;
    border-top-color: #c8102e;
    border-bottom-width: 0;
}
.asc::after {
    border-top-width: 0;
    border-bottom: 3px solid #c8102e;
}
.w-date { width: 87px; }
.w-time { width: 82px; }
.w-inst { width: 116px; }
.w-type { width: 70px; }
.w-name { width: 39px; }
.w-check { width: 41px; }
.w-int { width: 37px; }
.w-result { width: 196px; }
.w-addit { width: 63px; }
.w-access { width: 91px; }
.w-entity { width: 40px; }
.w-object { width: 60px; }
.w-field { width: 43px; }
.w-value { width: 49px; }

.grid .active {
    position: relative;
    background: #ffeea0;
}
/* red corner marks round the focused cell */
.active::before {
    --c: #b01818;
    content: "";
    position: absolute;
    inset: -4px -3px;
    pointer-events: none;
    background:
        linear-gradient(var(--c), var(--c)) 0 0 / 5px 1px,
        linear-gradient(var(--c), var(--c)) 0 0 / 1px 5px,
        linear-gradient(var(--c), var(--c)) 100% 0 / 5px 1px,
        linear-gradient(var(--c), var(--c)) 100% 0 / 1px 5px,
        linear-gradient(var(--c), var(--c)) 0 100% / 5px 1px,
        linear-gradient(var(--c), var(--c)) 0 100% / 1px 5px,
        linear-gradient(var(--c), var(--c)) 100% 100% / 5px 1px,
        linear-gradient(var(--c), var(--c)) 100% 100% / 1px 5px;
    background-repeat: no-repeat;
}
.cell-edit {
    display: flex;
    align-items: center;
    justify-content: space-between;
    height: 17px;
}
.cell-edit button {
    display: flex;
    align-items: center;
    justify-content: center;
    width: 15px;
    height: 15px;
    border: 1px solid #7d7a6c;
    border-radius: 2px;
    background: linear-gradient(#fff, #e3e3d5);
}

.h-scroll {
    display: flex;
    gap: 1px;
    height: 21px;
    padding: 2px 2px 2px 1px;
}
.h-scroll button {
    width: 17px;
    background: #f0f5fa;
    display: flex;
    align-items: center;
    justify-content: center;
}
.h-track {
    flex: 1;
    padding: 1px 2px;
    background: #fbfbfb;
}
.h-thumb {
    width: 75%;
    height: 15px;
    display: flex;
    align-items: center;
    justify-content: center;
    border: 1px solid #9db1c2;
    border-radius: 1px;
    background: linear-gradient(#e9f1f7, #d3e0ec);
}
.h-thumb span {
    width: 9px;
    height: 6px;
    background: radial-gradient(circle, #8ea2b3 1px, transparent 1px) 0 0 / 3px 3px;
}

.status-bar {
    display: grid;
    grid-template-columns: 1fr auto 1fr;
    align-items: center;
    height: 28px;
    padding: 0 13px;
}
.sap-logo {
    grid-column: 2;
}
.sap-text {
    font: bold 14px "Liberation Sans", Arial, sans-serif;
    fill: #fff;
    stroke: #fff;
    stroke-width: 1px;
}
.status-bar .icon-btn {
    justify-self: end;
    min-width: 0;
}

/* Windows taskbar */
.taskbar {
    display: flex;
    align-items: center;
    height: 48px;
    color: #fff;
    font-family: "Open Sans", "Noto Sans", sans-serif;
    font-size: 11px;
    line-height: 16px;
    background: linear-gradient(90deg, #2b2427, #3c1f19 8%, #4a1819 13%, #44141f 15%, #44141f 28%, #451818 30%, #2d2516 33%, #2d2516 49%, #4a1819 57%, #43142a 61%, #41152a 68%, #261c29 75%, #15243a 82%, #13253c);
}
.weather {
    display: flex;
    align-items: center;
    gap: 9px;
    width: 320px;
    padding-left: 21px;
}
.dim {
    color: #c9c0c0;
}
.sun {
    position: relative;
    width: 20px;
    height: 20px;
    border-radius: 50%;
    background: linear-gradient(160deg, #f2bf2c, #f2640c);
}
.sun-badge,
.badge {
    position: absolute;
    top: -7px;
    right: -5px;
    width: 16px;
    height: 16px;
    border-radius: 50%;
    background: #c42b1c;
    text-align: center;
    font-size: 12px;
}
.apps {
    display: flex;
    align-items: center;
}
.start {
    padding: 0 13px 0 12px;
}
.search {
    display: flex;
    align-items: center;
    gap: 10px;
    width: 218px;
    height: 30px;
    margin-right: 3px;
    padding: 0 5px 0 10px;
    border-radius: 15px;
    background: #f4f2f2;
}
.search input {
    flex: 1;
    min-width: 0;
    padding: 0;
    border: 0;
    outline: 0;
    background: none;
    font: 13px "Open Sans", "Noto Sans", sans-serif;
}
.search input::placeholder {
    color: #5a5a5a;
}
.app {
    position: relative;
    width: 44px;
    height: 40px;
    display: flex;
    align-items: center;
    justify-content: center;
}
.app.running::after {
    content: "";
    position: absolute;
    bottom: 1px;
    width: 6px;
    height: 3px;
    border-radius: 2px;
    background: #a09a9c;
}
.app .badge {
    top: 3px;
    right: 5px;
    background: #4cb8fa;
    color: #111;
}
.app.current {
    background: linear-gradient(#4f2636, #4f2636) center / 38px 100% no-repeat;
}
.app.current::after {
    width: 16px;
    background: #4cc2ff;
}
.tray {
    flex: 1;
    display: flex;
    align-items: center;
    justify-content: flex-end;
    gap: 18px;
    padding-right: 19px;
    font-size: 12px;
}
.lang {
    text-align: center;
}
.tray-icons {
    display: flex;
    align-items: center;
    gap: 7px;
}
.clock {
    text-align: right;
}
```
